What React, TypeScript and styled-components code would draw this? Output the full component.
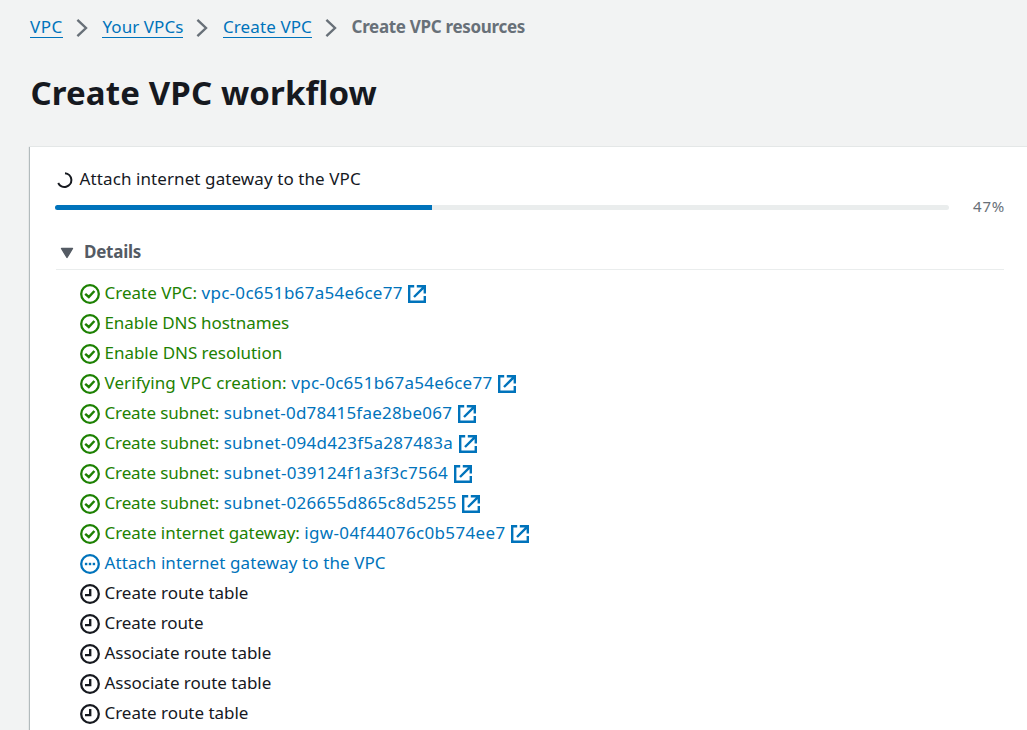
import React, { Fragment } from 'react';
import styled, { createGlobalStyle } from 'styled-components';

const GlobalStyle = createGlobalStyle`
  html, body, #root { height: 100%; }
  body {
    margin: 0;
    overflow: hidden;
    background: #f2f3f3;
    color: #16191f;
    font-family: 'Noto Sans', 'Open Sans', sans-serif;
    font-size: 17px;
    line-height: 30px;
  }
`;

const Page = styled.main`
  display: flex;
  flex-direction: column;
  height: 100vh;
  box-sizing: border-box;
  padding: 12px 0 0 30px;
  white-space: nowrap;
  overflow: hidden;
`;

const Breadcrumbs = styled.nav`
  display: flex;
  align-items: center;
  height: 30px;
`;

const Crumb = styled.a<{ $tracking: number }>`
  color: #0073bb;
  line-height: 20px;
  height: 20px;
  margin-top: 1px;
  border-bottom: 1px solid #0073bb;
  letter-spacing: ${(p) => p.$tracking}px;
  text-decoration: none;
`;

const CurrentCrumb = styled.span`
  color: #687078;
  font-weight: 700;
  letter-spacing: -0.31px;
`;

const Chevron = styled.svg`
  width: 12px;
  height: 20px;
  margin: 2px 14.6px 0 13px;
  flex: none;
`;

const Title = styled.h1`
  margin: 27px 0 0 0.5px;
  font-size: 33px;
  line-height: 48px;
  font-weight: 700;
  letter-spacing: 0.13px;
`;

const Panel = styled.section`
  display: flex;
  flex-direction: column;
  flex: 1;
  margin-top: 30px;
  padding: 17px 22px 0 25px;
  background: #fff;
  box-shadow: 0 -1px 0 #e4e7e7, -1px 0 1px rgba(0, 28, 36, 0.26);
`;

const Status = styled.div`
  display: flex;
  align-items: center;
  height: 30px;
`;

const Spinner = styled.svg`
  width: 16px;
  height: 16px;
  margin: 2px 6.6px 0 2px;
  flex: none;
`;

const Label = styled.span<{ $tracking: number }>`
  letter-spacing: ${(p) => p.$tracking}px;
`;

const Progress = styled.div`
  display: flex;
  align-items: center;
  gap: 24px;
  height: 26px;
`;

const Track = styled.div`
  flex: 1;
  height: 5px;
  border-radius: 5px;
  overflow: hidden;
  background: #eaeded;
`;

const Fill = styled.div`
  width: 42.2%;
  height: 100%;
  background: #0073bb;
`;

const Percent = styled.span`
  width: 32px;
  padding-bottom: 2px;
  color: #687078;
  font-size: 15px;
  line-height: 24px;
  letter-spacing: 0.85px;
`;

const DetailsHeader = styled.div`
  display: flex;
  align-items: center;
  height: 33px;
  margin: 16px 1px 0 1px;
  border-bottom: 1px solid #eaeded;
  color: #545b64;
  font-weight: 700;
  letter-spacing: -0.25px;
`;

const DetailsTitle = styled.span`
  padding-bottom: 2px;
`;

const Caret = styled.svg`
  width: 14px;
  height: 12px;
  margin: 1px 10px 0 4px;
  flex: none;
`;

const Steps = styled.ul`
  list-style: none;
  margin: 8px 0 0;
  padding: 0 0 0 25px;
`;

type State = 'success' | 'active' | 'pending';

const stateColor: Record<State, string> = {
  success: '#1d8102',
  active: '#0073bb',
  pending: '#16191f',
};

const Step = styled.li<{ $state: State }>`
  display: flex;
  align-items: center;
  height: 30px;
  color: ${(p) => stateColor[p.$state]};
`;

const StepIcon = styled.svg`
  width: 20px;
  height: 20px;
  margin: 2px 4.5px 0 0;
  flex: none;
`;

const ResourceLink = styled.a<{ $tracking: number }>`
  margin-left: 4.5px;
  color: #0073bb;
  letter-spacing: ${(p) => p.$tracking}px;
  text-decoration: none;
`;

const ExternalIcon = styled.svg`
  width: 18px;
  height: 18px;
  margin: 2px 0 0 5.5px;
  color: #0073bb;
  flex: none;
`;

const crumbs = [
  { text: 'VPC', tracking: 0.55 },
  { text: 'Your VPCs', tracking: 0.06 },
  { text: 'Create VPC', tracking: 0.1 },
];

interface StepData {
  state: State;
  text: string;
  tracking: number;
  link?: string;
  linkTracking?: number;
}

const steps: StepData[] = [
  { state: 'success', text: 'Create VPC:', tracking: 0, link: 'vpc-0c651b67a54e6ce77', linkTracking: 0.29 },
  { state: 'success', text: 'Enable DNS hostnames', tracking: -0.08 },
  { state: 'success', text: 'Enable DNS resolution', tracking: -0.03 },
  { state: 'success', text: 'Verifying VPC creation:', tracking: 0.07, link: 'vpc-0c651b67a54e6ce77', linkTracking: 0.29 },
  { state: 'success', text: 'Create subnet:', tracking: -0.14, link: 'subnet-0d78415fae28be067', linkTracking: 0.22 },
  { state: 'success', text: 'Create subnet:', tracking: -0.14, link: 'subnet-094d423f5a287483a', linkTracking: 0.29 },
  { state: 'success', text: 'Create subnet:', tracking: -0.14, link: 'subnet-039124f1a3f3c7564', linkTracking: 0.33 },
  { state: 'success', text: 'Create subnet:', tracking: -0.14, link: 'subnet-026655d865c8d5255', linkTracking: 0.3 },
  { state: 'success', text: 'Create internet gateway:', tracking: -0.05, link: 'igw-04f44076c0b574ee7', linkTracking: 0.34 },
  { state: 'active', text: 'Attach internet gateway to the VPC', tracking: 0.09 },
  { state: 'pending', text: 'Create route table', tracking: -0.03 },
  { state: 'pending', text: 'Create route', tracking: -0.08 },
  { state: 'pending', text: 'Associate route table', tracking: -0.03 },
  { state: 'pending', text: 'Associate route table', tracking: -0.03 },
  { state: 'pending', text: 'Create route table', tracking: -0.03 },
];

function StatusIcon({ state }: { state: State }) {
  return (
    <StepIcon viewBox="0 0 20 20" fill="none" stroke="currentColor" strokeWidth="2.3">
      <circle cx="10" cy="10" r="8.8" />
      {state === 'success' && <path d="M5.2 9.9 8.8 13 14.4 7" strokeWidth="2.5" />}
      {state === 'active' && (
        <g fill="currentColor" stroke="none">
          <rect x="4.9" y="8.8" width="2.4" height="2.4" />
          <rect x="8.8" y="8.8" width="2.4" height="2.4" />
          <rect x="12.7" y="8.8" width="2.4" height="2.4" />
        </g>
      )}
      {state === 'pending' && <path d="M10.2 5v6.1H5" strokeWidth="2.4" />}
    </StepIcon>
  );
}

export default function App() {
  return (
    <Page>
      <GlobalStyle />
      <Breadcrumbs>
        {crumbs.map((c) => (
          <Fragment key={c.text}>
            <Crumb $tracking={c.tracking}>{c.text}</Crumb>
            <Chevron viewBox="0 0 12 20" fill="none" stroke="#687078" strokeWidth="2.4">
              <path d="M1.4 1.8 10 10 1.4 18.2" />
            </Chevron>
          </Fragment>
        ))}
        <CurrentCrumb>Create VPC resources</CurrentCrumb>
      </Breadcrumbs>
      <Title>Create VPC workflow</Title>
      <Panel>
        <Status>
          <Spinner viewBox="0 0 16 16" fill="none" stroke="#16191f" strokeWidth="2">
            <path d="M8 1.2A6.9 6.9 0 1 1 1.2 11" />
          </Spinner>
          <Label $tracking={0.09}>Attach internet gateway to the VPC</Label>
        </Status>
        <Progress>
          <Track>
            <Fill />
          </Track>
          <Percent>47%</Percent>
        </Progress>
        <DetailsHeader>
          <Caret viewBox="0 0 14 12">
            <path d="M1.5 1.5h11L7 10.5Z" fill="#545b64" stroke="#545b64" strokeWidth="1.4" strokeLinejoin="round" />
          </Caret>
          <DetailsTitle>Details</DetailsTitle>
        </DetailsHeader>
        <Steps>
          {steps.map((s, i) => (
            <Step key={i} $state={s.state}>
              <StatusIcon state={s.state} />
              <Label $tracking={s.tracking}>{s.text}</Label>
              {s.link && (
                <>
                  <ResourceLink $tracking={s.linkTracking ?? 0}>{s.link}</ResourceLink>
                  <ExternalIcon viewBox="0 0 18 18" fill="none" stroke="currentColor" strokeWidth="2.4">
                    <path d="M6.2 1.2H1.2V16.8H16.8V11" />
                    <path d="M8.8 1.2H16.8V8.4M16.4 1.6 6 12" />
                  </ExternalIcon>
                </>
              )}
            </Step>
          ))}
        </Steps>
      </Panel>
    </Page>
  );
}
